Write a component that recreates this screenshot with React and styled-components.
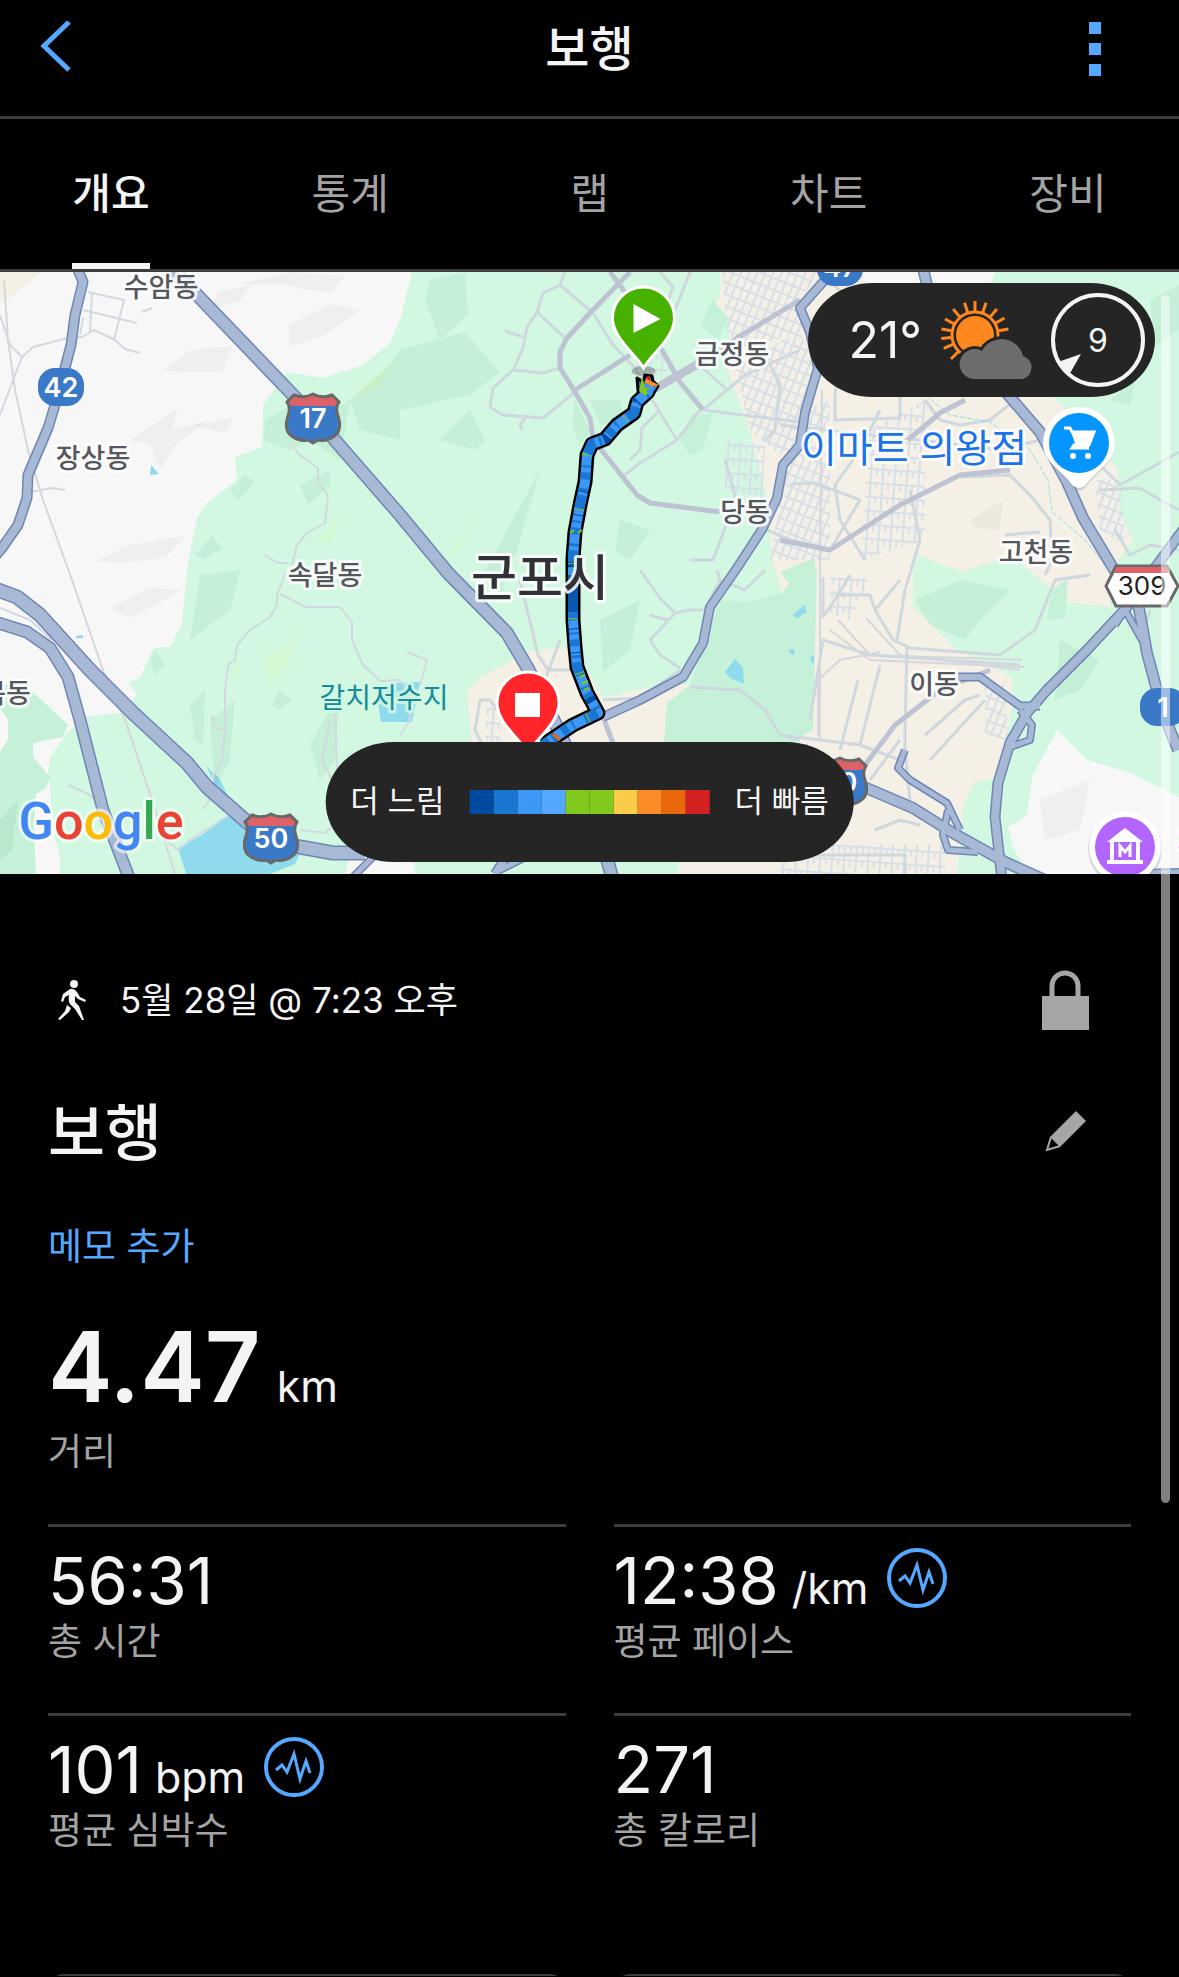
import styled, { createGlobalStyle } from "styled-components";

const GlobalStyle = createGlobalStyle`
	* {
		box-sizing: border-box;
		margin: 0;
		padding: 0;
	}
	body {
		background-color: #000;
		color: #f4f4f4;
		font-family: Inter, "Noto Sans CJK KR", sans-serif;
	}
	button {
		background: none;
		border: none;
		color: inherit;
		font: inherit;
		cursor: pointer;
	}
	a {
		color: inherit;
		text-decoration: none;
	}
	svg {
		display: block;
	}
`;

const Page = styled.main`
	position: relative;
	min-height: 100vh;
	overflow: hidden;
`;

const Header = styled.header`
	display: flex;
	align-items: center;
	justify-content: space-between;
	height: 119px;
	padding: 0 78px 18px 40px;
	border-bottom: 3px solid #3d3d3d;
	h1 {
		padding-left: 18px;
		font-size: 48px;
		font-weight: 500;
		line-height: 60px;
	}
`;

const IconButton = styled.button`
	display: grid;
	place-content: center;
`;

const Tabs = styled.nav`
	display: flex;
	justify-content: space-between;
	height: 153px;
	padding: 0 72px;
	border-bottom: 3px solid #3d3d3d;
`;

const Tab = styled.a`
	display: grid;
	place-items: center;
	min-width: 78px;
	padding-bottom: 2px;
	font-size: 42px;
	font-weight: ${(props) => (props.$active ? 500 : 400)};
	color: ${(props) => (props.$active ? "#f4f4f4" : "#a3a3a3")};
	border-bottom: 6px solid ${(props) => (props.$active ? "#f4f4f4" : "transparent")};
`;

const MapSection = styled.section`
	position: relative;
	height: 602px;
	overflow: hidden;
	.canvas {
		width: 100%;
		height: 100%;
	}
`;

const Pill = styled.div`
	position: absolute;
	display: flex;
	align-items: center;
	background-color: #252525;
	border-radius: 68px / 60px;
`;

const Weather = styled(Pill)`
	top: 11px;
	right: 24px;
	height: 114px;
	gap: 16px;
	padding: 0 10px 0 40px;
	.temp {
		font-size: 50px;
		font-weight: 400;
	}
`;

const Legend = styled(Pill)`
	bottom: 12px;
	left: 50%;
	height: 120px;
	gap: 25px;
	padding: 0 25px;
	transform: translateX(-50%);
	font-size: 31px;
	line-height: 44px;
	white-space: nowrap;
	.caption {
		padding-bottom: 2px;
	}
`;

const Scale = styled.div`
	display: flex;
	span {
		width: 24px;
		height: 24px;
	}
`;

const Details = styled.section`
	padding: 91px 48px 0;
`;

const Row = styled.div`
	display: flex;
	align-items: center;
	justify-content: space-between;
	height: ${(props) => props.$height}px;
	padding-right: 34px;
	h2 {
		padding-top: 6px;
		font-size: 62px;
		font-weight: 500;
		line-height: 80px;
	}
	& + & {
		margin-top: 34px;
	}
`;

const ActivityDate = styled.div`
	display: flex;
	align-items: center;
	gap: 34px;
	padding-left: 10px;
	font-size: 35px;
	line-height: 50px;
`;

const NoteLink = styled.a`
	display: block;
	margin-top: 24px;
	font-size: 37px;
	line-height: 60px;
	color: #55a8ff;
`;

const Metric = styled.div`
	.value {
		display: flex;
		align-items: baseline;
		gap: ${(props) => (props.$main ? 16 : 13)}px;
		height: ${(props) => (props.$main ? 106 : 78)}px;
		line-height: ${(props) => (props.$main ? 86 : 78)}px;
		font-size: ${(props) => (props.$main ? 97 : 65)}px;
		font-weight: ${(props) => (props.$main ? 600 : 400)};
	}
	.unit {
		font-size: 43px;
		font-weight: 400;
	}
	.label {
		font-size: 37px;
		line-height: 44px;
		color: #a3a3a3;
	}
	svg {
		align-self: center;
		margin: 0 0 6px 6px;
	}
`;

const Distance = styled.div`
	margin-top: 47px;
`;

const Grid = styled.div`
	display: grid;
	grid-template-columns: 1fr 1fr;
	column-gap: 48px;
	margin-top: 50px;
	${Metric} {
		height: 189px;
		padding-top: 15px;
		border-top: 3px solid #3d3d3d;
	}
`;

const Cards = styled.div`
	display: grid;
	grid-template-columns: 1fr 1fr;
	gap: 48px;
	height: 74px;
	padding-top: 72px;
	overflow: hidden;
	div {
		height: 120px;
		border: 3px solid #3d3d3d;
		border-radius: 16px;
	}
`;

const ScrollThumb = styled.div`
	position: absolute;
	top: 295px;
	right: 9px;
	width: 9px;
	height: 1208px;
	border-radius: 5px;
	background-color: rgba(255, 255, 255, 0.5);
`;

/* ---------- map data ---------- */

const GREEN = "#d2f8e2";
const BEIGE = "#f5f0e5";
const GRAY = "#f7f7f7";
const WATER = "#90daee";

const areas = [
	[GRAY, "0,272 412,272 400,320 390,343 363,365 323,378 287,372 263,405 262,447 235,457 237,480 207,503 197,518 192,542 187,572 182,623 170,647 153,648 140,678 128,682 137,695 123,712 87,717 67,733 50,757 48,773 50,790 53,830 60,857 60,874 0,874"],
	["#c4f1d7", "0,690 12,678 33,692 68,725 63,737 33,743 33,757 50,777 46,788 36,794 34,830 36,874 0,874 0,752 8,740 8,720 0,708"],
	[BEIGE, "0,272 42,272 10,298 0,303"],
	[BEIGE, "720,272 860,272 1000,340 1053,397 1068,412 1090,440 1118,470 1120,515 1133,540 1118,562 1110,607 1068,602 1010,555 963,572 917,555 913,607 960,650 993,667 1012,677 1013,703 998,777 973,783 963,810 957,874 678,874 678,863 800,740 817,577 783,593 773,565 767,498 750,432 727,368 730,318 715,305 720,295"],
	[GRAY, "860,272 995,272 985,300 870,290"],
	[GREEN, "913,560 963,572 1005,557 1052,590 1040,640 990,665 955,648 913,607"],
	["#c4f1d7", "1068,578 1052,590 1047,620 1065,618"],
	[BEIGE, "480,677 533,650 567,648 583,663 603,698 667,683 690,685 667,703 663,760 473,760 467,693"],
	["#c4f1d7", "720,600 750,602 783,593 797,572 817,570 813,730 800,737 797,760 663,760 667,703 690,685 703,650"],
	["#c4f1d7", "713,300 728,318 718,340 700,325"],
	["#c4f1d7", "692,415 713,413 703,450 690,455 680,440"],
	["#c4f1d7", "780,572 815,558 815,600 795,590"],
	[GRAY, "1057,730 1087,760 1130,773 1179,797 1179,874 1028,874 1013,847 1008,827 1027,815 1032,777"],
	[GRAY, "345,874 352,850 412,858 416,874"],
	[WATER, "178,848 200,836 228,816 244,826 270,836 300,853 295,864 270,874 186,874"],
	[WATER, "376,690 395,683 420,682 412,722 381,722"],
	[WATER, "207,767 219,778 233,806 226,802 213,782"],
	[WATER, "725,672 735,659 743,668 744,684 730,678"],
	[WATER, "793,615 804,605 807,612 797,618"],
	[WATER, "788,650 795,649 793,656"],
	[WATER, "809,658 814,655 814,665"],
	[WATER, "151,465 159,474 150,475"],
	[WATER, "76,636 83,635 83,638 76,638"],
];

const hills = [
	["#000", "218,292 250,285 240,301 210,310"],
	["#000", "235,285 290,272 345,276 332,292 305,290 285,284"],
	["#000", "288,326 330,304 360,310 325,335 290,347"],
	["#000", "163,370 190,350 232,346 222,372 180,372"],
	["#000", "130,440 178,408 172,430 208,420 175,445 160,470 150,445"],
	["#000", "192,425 233,418 225,433"],
	["#000", "93,562 130,545 185,536 165,558 125,563"],
	["#000", "110,608 150,588 182,590 160,602 130,618"],
	["#063", "265,420 300,400 320,420 350,400 340,460 310,440 290,450 264,440"],
	["#063", "350,400 385,370 400,350 400,440 360,430"],
	["#063", "230,490 245,475 255,482 238,500"],
	["#063", "195,555 212,535 222,548 204,560"],
	["#063", "300,485 330,470 330,485 308,505"],
	["#063", "200,575 240,570 230,610 190,640"],
	["#063", "150,660 155,650 165,665 155,675"],
	["#063", "190,705 205,690 203,745 195,740"],
	["#063", "272,705 280,690 292,700 280,710"],
	["#063", "400,350 465,332 500,372 470,395 400,410"],
	["#063", "430,280 465,272 468,315 440,340 425,300"],
	["#063", "470,410 485,440 475,450 440,440"],
	["#063", "575,400 590,430 580,445 572,425"],
	["#063", "590,400 620,400 625,420 600,425"],
	["#063", "600,620 640,600 630,650 603,672"],
	["#063", "915,600 960,580 1010,590 980,620 965,640 930,625"],
	["#063", "1060,640 1100,660 1080,690 1055,700"],
	["#063", "1150,300 1179,285 1179,330 1155,345"],
	["#063", "1110,400 1135,380 1130,405"],
	["#063", "540,470 520,540 500,600 485,570"],
	["#063", "620,520 650,530 630,560 615,550"],
	["#063", "310,745 340,690 335,760 320,780"],
	["#063", "210,720 235,700 230,760 215,790"],
	["#063", "0,820 18,800 12,850 0,860"],
	["#ff0", "445,560 470,520 460,550"],
	["#ff0", "355,390 395,360 380,385 360,395"],
	["#ff0", "230,670 240,660 240,675 235,680"],
	["#ff0", "262,660 298,638 285,670 270,685"],
	["#ff0", "318,540 340,515 330,545"],
	["#000", "1040,800 1090,780 1080,830 1045,840"],
	["#000", "970,520 1003,500 1000,530 975,528"],
];

// dense street blocks of the built-up districts
const blocks = [
	["streetsA", "722,272 820,272 800,300 806,330 740,350 727,330"],
	["streetsA", "735,368 800,330 815,370 800,440 780,455 750,430"],
	["streetsB", "725,440 765,445 762,498 725,490"],
	["streetsA", "782,420 830,400 830,560 770,560 785,470"],
	["streetsB", "870,430 925,400 925,540 860,560"],
	["streetsA", "1095,480 1120,480 1125,545 1100,530"],
	["streetsB", "780,845 945,845 945,874 780,874"],
	["streetsA", "985,680 1005,685 1008,740 985,735"],
	["streetsB", "830,577 870,577 850,620 828,612"],
	["streetsB", "486,708 500,708 500,750 486,750"],
	["streetsB", "640,340 675,360 655,385 635,370"],
];

const paths = [
	"0,315 10,345 22,357 15,375 0,415",
	"22,357 33,347 68,338 82,337 94,330 115,340 125,349 140,353",
	"88,292 124,300 114,340",
	"83,310 137,323",
	"92,292 90,332",
	"83,318 80,335",
	"142,312 152,308",
	"30,492 53,488 65,490",
	"292,445 300,455 318,468 318,482 328,495",
	"265,555 278,563 288,563",
	"328,495 325,523 307,533 297,545 292,565",
	"285,574 277,595 277,605 270,617 250,630 237,645 235,660 228,665 225,690 225,730 222,763 213,775 213,795 202,810",
	"280,594 305,607 340,607 352,622 352,640 363,665 380,681 400,680",
	"68,785 90,795 100,805",
	"212,716 215,727 225,730",
	"160,835 178,850 190,840 227,816",
	"300,830 325,833 340,820",
	"0,608 30,620 52,640",
	"335,700 337,770",
	"330,720 322,760 332,780",
	"407,652 427,660 420,685",
	"400,680 412,695 410,720 400,735",
];

const minorRoads = [
	"565,272 560,285 543,293 537,312 527,327 523,348 513,370 493,388 490,407 503,415 543,418 575,392",
	"513,370 543,373 560,368",
	"537,312 565,338",
	"560,285 593,313 613,345 635,368 645,385",
	"505,331 523,337",
	"527,415 520,425 522,430",
	"660,272 673,287 665,310",
	"690,272 677,305 665,330",
	"652,400 677,440 700,410",
	"660,410 642,428 640,450 630,460",
	"677,440 637,465 623,477",
	"703,410 745,375 778,360 800,350",
	"694,360 727,390",
	"703,410 800,422 800,440",
	"737,338 770,365 780,385 775,430 765,440",
	"725,460 735,495 728,520 713,560 690,560",
	"763,528 790,540 830,550 860,500",
	"520,580 538,655 548,670 575,670",
	"560,640 545,680",
	"603,700 640,698 680,670",
	"640,570 660,598 675,613 650,640 660,655 680,668",
	"675,613 690,610 705,610 720,580 717,570",
	"720,580 745,590 765,570",
	"668,620 650,615",
	"485,750 475,730 480,700 490,700 505,720",
	"820,272 850,300 835,395 835,420 900,418 900,395",
	"925,400 940,420 960,425 990,420 1015,400",
	"780,425 870,435 920,440 1000,450 1040,440",
	"860,500 815,483 790,484",
	"865,560 840,520 835,485 860,450 880,410",
	"910,490 920,540 905,590 897,640",
	"960,477 1010,475 1030,495 1050,520 1052,560 1045,575",
	"1005,535 1040,532",
	"1090,455 1120,485 1179,452",
	"1100,490 1140,488 1160,500 1179,510",
	"1115,530 1130,555 1150,545 1179,550",
	"823,577 823,617 835,600 850,575",
	"835,595 870,595 875,610 893,640 910,648 1000,655 1035,630 1055,580 1090,575",
	"875,610 900,580",
	"907,645 905,730 905,750 910,800",
	"780,735 860,745 900,760",
	"690,687 740,690 765,710 780,735 800,740",
	"810,720 823,640 870,655 1020,665",
	"858,680 840,750",
	"880,665 860,745",
	"930,760 985,700",
	"925,735 965,700 980,695",
	"870,780 900,740",
	"875,830 900,820 920,825",
	"800,855 905,855 905,874",
	"1150,610 1140,640",
];

const arterials = [
	"630,272 590,313 567,338 560,352 560,368 575,392 590,418 593,438 603,452 637,495 650,503 720,512",
	"575,390 630,355",
	"610,272 620,285 663,352 680,382 703,410",
	"647,395 700,365 737,338 800,300",
	"650,390 705,358",
	"780,540 830,550 900,505 960,475 1010,470",
	"908,440 940,413 965,400",
	"603,717 613,743",
	"865,765 895,725 940,690 990,670",
];

const rails = [
	"4,280 8,340 15,390 28,450 43,500 72,580 103,670 125,720 152,800 175,874",
	"822,390 820,560 820,740",
	"838,620 870,655 1022,660",
	"830,630 870,660 1024,667",
	"866,618 900,655 1020,670",
	"818,735 818,680 840,660 880,652",
];

const highways = [
	[9, "78,270 83,282 75,315 71,345 65,368 55,405 48,428 28,475 27,498 18,525 2,548 -8,560"],
	[12, "168,265 200,298 293,395 333,438 400,515 448,573 507,633 527,667 557,727 590,800 613,880"],
	[13, "-5,589 17,597 40,615 90,670 133,713 187,763 207,787 247,822 270,840 300,847 333,853 365,853"],
	[11, "-5,622 27,632 50,648 68,677 80,720 103,810 130,880"],
	[8, "603,717 640,700 683,677 703,643 710,607 737,568 763,528 777,498 783,465 800,445 805,412 818,368 810,332 800,308 823,282 840,270"],
	[10, "923,268 927,285 970,350 1010,397 1040,432 1067,482 1083,518 1113,568 1138,603 1147,653 1163,713 1178,750"],
	[9, "1183,530 1157,565 1127,607 1087,650 1047,690 1027,713 1010,743 998,783 995,817 1002,880"],
	[7, "958,677 980,677 1020,706 1040,706"],
	[6, "1020,710 1032,725 1030,740 1010,747"],
	[6, "1115,625 1125,610 1142,640"],
	[6, "905,750 898,768 910,780 947,803 960,830"],
	[6, "948,810 943,835 948,850 978,852"],
	[10, "864,787 913,808 953,833 1007,863 1045,880"],
	[6, "1100,874 1179,872"],
	[6, "350,880 375,855"],
	[8, "495,874 510,850"],
	[6, "500,870 530,855"],
];

const route =
	"648,382 648,392 637,402 634,413 617,425 605,439 592,444 587,455 585,482 580,505 575,532 573,558 573,590 573,620 575,647 577,667 587,693 598,713 573,725 558,735 543,745";

const places = [
	["수암동", 161, 297, 27],
	["장상동", 93, 468, 27],
	["속달동", 325, 585, 27],
	["금정동", 732, 364, 27],
	["당동", 745, 522, 27],
	["고천동", 1036, 562, 27],
	["이동", 934, 694, 27],
	["목동", 6, 703, 27],
];

const paceColors = [
	"#004ba0", "#1976d2", "#3d97f5", "#55a8ff", "#81c91d",
	"#81c91d", "#fbcc4a", "#fb8c28", "#ea670c", "#d32020",
];

const tabs = ["개요", "통계", "랩", "차트", "장비"];

/* ---------- map pieces ---------- */

const MapLabel = styled.text`
	font-family: Inter, "Noto Sans CJK KR", sans-serif;
	text-anchor: middle;
	paint-order: stroke;
	stroke: ${(props) => props.$halo || "#fff"};
	stroke-width: ${(props) => (props.$plain ? 0 : 6)}px;
	stroke-linejoin: round;
	stroke-opacity: 0.85;
`;

const Wordmark = styled(MapLabel)`
	font-family: Roboto, sans-serif;
	stroke-opacity: 0.6;
`;

function Lines({ list, color, width }) {
	return (
		<g fill="none" stroke={color} strokeWidth={width} strokeLinejoin="round">
			{list.map((points) => (
				<polyline key={points} points={points} />
			))}
		</g>
	);
}

function Shield({ x, y, children }) {
	return (
		<g transform={`translate(${x} ${y})`}>
			<path
				d="M-19-23 Q-9-19 0-24 Q9-19 19-23 L26-16 Q22-10 25-2 Q30 13 20 19 Q12 24 5 22 L0 25 L-5 22 Q-12 24-20 19 Q-30 13-25-2 Q-22-10-26-16Z"
				fill="#3a78c8"
			/>
			<path d="M-19-22 Q-9-18 0-23 Q9-18 19-22 L25-16 L22-12 H-22 L-25-16Z" fill="#dd6166" />
			<path
				d="M-19-23 Q-9-19 0-24 Q9-19 19-23 L26-16 Q22-10 25-2 Q30 13 20 19 Q12 24 5 22 L0 25 L-5 22 Q-12 24-20 19 Q-30 13-25-2 Q-22-10-26-16Z"
				fill="none"
				stroke="#686868"
				strokeWidth="3"
			/>
			<MapLabel $plain y="10" fontSize="27" fontWeight="600" fill="#fff">
				{children}
			</MapLabel>
		</g>
	);
}

function RoadBadge({ x, y, children }) {
	return (
		<g transform={`translate(${x} ${y})`}>
			<rect x="-23" y="-19" width="46" height="38" rx="17" fill="#3a78c8" />
			<MapLabel $plain y="10" fontSize="27" fontWeight="600" fill="#fff">
				{children}
			</MapLabel>
		</g>
	);
}

function Pin({ x, y, color, children }) {
	return (
		<g transform={`translate(${x} ${y})`}>
			<ellipse cx="0" cy="53" rx="12" ry="5" fill="#000" opacity=".25" />
			<path
				d="M0 50 C-8 36-31 20-31 0 A31 31 0 0 1 31 0 C31 20 8 36 0 50Z"
				fill={color}
				stroke="#fff"
				strokeWidth="3"
			/>
			{children}
		</g>
	);
}

function RouteMap() {
	return (
		<svg
			className="canvas"
			viewBox="0 272 1179 602"
			preserveAspectRatio="xMidYMid slice"
			role="img"
			aria-label="군포시 경로 지도"
		>
			<defs>
				<pattern id="streetsA" width="15" height="11" patternUnits="userSpaceOnUse" patternTransform="rotate(22)">
					<path d="M0 1H15M2 0V11M9 1V11" stroke="#d7dfe8" strokeWidth="2" fill="none" />
				</pattern>
				<pattern id="streetsB" width="12" height="14" patternUnits="userSpaceOnUse" patternTransform="rotate(4)">
					<path d="M0 1H12M2 0V14M8 0V7" stroke="#d7dfe8" strokeWidth="2" fill="none" />
				</pattern>
			</defs>

			<rect y="272" width="1179" height="602" fill={GREEN} />
			{areas.map(([fill, points]) => (
				<polygon key={points} fill={fill} points={points} />
			))}
			{hills.map(([fill, points]) => (
				<polygon key={points} fill={fill} opacity={fill === "#000" ? 0.03 : 0.06} points={points} />
			))}
			{blocks.map(([id, points]) => (
				<polygon key={points} fill={`url(#${id})`} points={points} />
			))}

			<Lines list={rails} color="#d6d7dd" width={2} />
			<Lines list={paths} color="#d3d9e1" width={2} />
			<Lines list={minorRoads} color="#cfd8df" width={3} />
			<Lines list={arterials} color="#bdc3d2" width={5} />
			<polyline
				points="925,395 950,415 990,422 1030,450 1048,480 1052,512 1085,540 1115,577"
				fill="none"
				stroke="#8fdcea"
				strokeDasharray="5 2"
			/>

			<g fill="none" strokeLinejoin="round">
				{highways.map(([width, points]) => (
					<polyline key={points} points={points} stroke="#6f86b5" strokeWidth={width + 2} />
				))}
				{highways.map(([width, points]) => (
					<polyline key={points} points={points} stroke="#a8b9d6" strokeWidth={width - 1} />
				))}
			</g>

			<g fill="none" strokeLinejoin="round">
				<path d="M638 391 L637 378 L643 382 L645 375 L652 376 L653 381 L658 386 L652 396Z" fill="#1976d2" stroke="#000" strokeWidth="3" />
				<polyline points={route} stroke="#000" strokeWidth="15" />
				<polyline points={route} stroke="#3d97f5" strokeWidth="10" />
				<polyline points={route} stroke="#1976d2" strokeWidth="10" strokeDasharray="2 5 7 9 3 4 14 12" />
				<polyline points={route} stroke="#004ba0" strokeWidth="10" strokeDasharray="1 23 1 47 5 61" />
				<polyline points={route} stroke="#81c91d" strokeWidth="10" strokeDasharray="1 54" strokeDashoffset="-46" />
				<path d="M573 575V612" stroke="#0b56b0" strokeWidth="10" />
				<path d="M580 677l5-2M582 684l6-3M584 690l5-2M570 533l4-3M578 533l4-3" stroke="#81c91d" strokeWidth="2" />
				<path d="M553 734l7 6" stroke="#ea670c" strokeWidth="3" />
				<path d="M639 391l3-15 3 12 8-1-7 9Z" fill="#81c91d" />
				<path d="M644 383l4-7 3 5 8 4-6 2-5-3Z" fill="#fb8c28" />
				<path d="M646 378l4-3v6Z" fill="#d32020" />
				<path d="M646 390l12-5-8 12Z" fill="#3d97f5" />
			</g>

			{places.map(([name, x, y, size]) => (
				<MapLabel key={name} x={x} y={y} fontSize={size} fontWeight="500" fill="#55575c">
					{name}
				</MapLabel>
			))}
			<MapLabel x="540" y="596" fontSize="50" fontWeight="500" fill="#303236">
				군포시
			</MapLabel>
			<MapLabel $halo={GREEN} x="384" y="708" fontSize="28" fill="#168b9c">
				갈치저수지
			</MapLabel>
			<MapLabel x="914" y="462" fontSize="39" fill="#1a73e8">
				이마트 의왕점
			</MapLabel>

			<RoadBadge x={61} y={387}>42</RoadBadge>
			<RoadBadge x={840} y={267}>47</RoadBadge>
			<RoadBadge x={1163} y={707}>1</RoadBadge>
			<Shield x={313} y={418}>17</Shield>
			<Shield x={271} y={838}>50</Shield>
			<Shield x={840} y={782}>50</Shield>
			<path d="M1116 566H1167L1178 586L1167 606H1116L1106 586Z" fill="#fff" stroke="#686868" strokeWidth="3" />
			<path d="M1117 567H1166L1169 573H1113Z" fill="#dd6166" />
			<MapLabel $plain x="1142" y="595" fontSize="26" fill="#222">
				309
			</MapLabel>

			<g transform="translate(1079 443)">
				<path d="M-35 0A35 35 0 0 1 35 0C35 20 16 28 7 42Q0 49-7 42C-16 28-35 20-35 0Z" fill="#888" opacity=".35" transform="translate(0 2)" />
				<path d="M-36 0A36 36 0 0 1 36 0C36 20 16 28 7 42Q0 48-7 42C-16 28-36 20-36 0Z" fill="#fff" />
				<circle r="30" fill="#0595ff" />
				<path d="M-15-15H-9L-7-11H15L10 2H-5L-7 5H10" fill="none" stroke="#fff" strokeWidth="3" />
				<path d="M-8-11H15L10 3H-3Z" fill="#fff" />
				<circle cx="-6" cy="13" r="3" fill="#fff" />
				<circle cx="9" cy="13" r="3" fill="#fff" />
			</g>
			<g transform="translate(1125 847)">
				<circle r="37" cy="2" fill="#888" opacity=".3" />
				<circle r="36" fill="#fff" />
				<circle r="30" fill="#b266ff" />
				<path d="M-18-5L0-19L18-5Z" fill="#fff" />
				<path d="M-13-5V15M13-5V15M-18 15H18" fill="none" stroke="#fff" strokeWidth="4" />
				<path d="M-5 10V-1L0 5L5-1V10" fill="none" stroke="#fff" strokeWidth="3" />
			</g>
			<MapLabel x="1194" y="860" fontSize="39" fill="#9b4df0">
				경
			</MapLabel>

			<Pin x={643.5} y={318} color="#47b100">
				<path d="M-10-14L17 1L-10 15Z" fill="#fff" />
			</Pin>
			<Pin x={528} y={703} color="#ff2528">
				<rect x="-13" y="-10" width="25" height="24" fill="#fff" />
			</Pin>

			<Wordmark x="101" y="839" fontSize="52" fontWeight="500">
				<tspan fill="#4285f4">G</tspan>
				<tspan fill="#ea4335">o</tspan>
				<tspan fill="#fbbc05">o</tspan>
				<tspan fill="#4285f4">g</tspan>
				<tspan fill="#34a853">l</tspan>
				<tspan fill="#ea4335">e</tspan>
			</Wordmark>
		</svg>
	);
}

/* ---------- icons ---------- */

function WeatherIcon() {
	const rays = [135, 157, 174, 190, 208, 230, 252, 270, 289, 310, 330, 350];
	return (
		<svg width="97" height="82" viewBox="0 0 97 82" aria-hidden="true">
			<g stroke="#ff8720" strokeWidth="3">
				{rays.map((angle) => (
					<path key={angle} d="M24 0H34" transform={`translate(37 36) rotate(${angle})`} />
				))}
				<circle cx="37" cy="36" r="23" fill="none" />
			</g>
			<circle cx="37" cy="36" r="19" fill="#ff8720" />
			<path
				d="M38 80A15 15 0 1 1 44 52A22 22 0 0 1 85 57A12 12 0 0 1 85 80Z"
				fill="#6d6d6d"
				stroke="#252525"
				strokeWidth="6"
				paintOrder="stroke"
			/>
		</svg>
	);
}

const Compass = styled.div`
	position: relative;
	display: grid;
	place-items: center;
	width: 94px;
	height: 94px;
	font-size: 32px;
	svg {
		position: absolute;
		inset: 0;
	}
`;

function PulseIcon() {
	return (
		<svg width="60" height="60" viewBox="0 0 60 60" fill="none" stroke="#55a8ff" aria-hidden="true">
			<circle cx="30" cy="30" r="28" strokeWidth="4" />
			<path d="M12 33L18 28L23 35L30 17L36 42L42 24L46 36" strokeWidth="3" />
		</svg>
	);
}

function Stat({ value, unit, label, pulse, main }) {
	return (
		<Metric $main={main}>
			<div className="value">
				{value}
				{unit && <span className="unit">{unit}</span>}
				{pulse && <PulseIcon />}
			</div>
			<p className="label">{label}</p>
		</Metric>
	);
}

export default function App() {
	return (
		<Page>
			<GlobalStyle />
			<Header>
				<IconButton aria-label="뒤로">
					<svg width="32" height="56" viewBox="0 0 32 56" fill="none">
						<path d="M29 1L4 25L29 49" stroke="#55a8ff" strokeWidth="5" />
					</svg>
				</IconButton>
				<h1>보행</h1>
				<IconButton aria-label="더보기">
					<svg width="12" height="54" viewBox="0 0 12 54" fill="#55a8ff">
						<path d="M0 0H12V12H0ZM0 21H12V33H0ZM0 42H12V54H0Z" />
					</svg>
				</IconButton>
			</Header>

			<Tabs>
				{tabs.map((tab, index) => (
					<Tab key={tab} href={`#tab-${index}`} $active={index === 0}>
						{tab}
					</Tab>
				))}
			</Tabs>

			<MapSection>
				<RouteMap />
				<Weather>
					<span className="temp">21°</span>
					<WeatherIcon />
					<Compass>
						<svg width="94" height="94" viewBox="0 0 94 94" aria-hidden="true">
							<circle cx="47" cy="47" r="45" fill="none" stroke="#f4f4f4" strokeWidth="4" />
							<path d="M30 61L7 69L18 82Z" fill="#f4f4f4" />
						</svg>
						9
					</Compass>
				</Weather>
				<Legend>
					<span className="caption">더 느림</span>
					<Scale>
						{paceColors.map((color, index) => (
							<span key={index} style={{ backgroundColor: color }} />
						))}
					</Scale>
					<span className="caption">더 빠름</span>
				</Legend>
			</MapSection>

			<Details>
				<Row $height={70}>
					<ActivityDate>
						<svg width="28" height="40" viewBox="0 0 28 40" fill="#f4f4f4" aria-hidden="true">
							<circle cx="16" cy="4" r="4" />
							<path d="M12 9Q16 8 19 12L22 17L28 20L27 22L20 19L17 16L17 22L21 26L26 40H24L17 29L12 24Q10 22 11 15L7 17L5 22L3 21L5 14Z" />
							<path d="M9 25L13 28L11 32L2 40L0 39L7 31Z" />
						</svg>
						<span>5월 28일 @ 7:23 오후</span>
					</ActivityDate>
					<IconButton aria-label="개인정보">
						<svg width="60" height="60" viewBox="0 0 60 60" fill="none">
							<path d="M15 30V16A13 13 0 0 1 41 16V30" stroke="#a6a6a6" strokeWidth="5" />
							<path d="M5 26H52V60H5Z" fill="#a6a6a6" />
						</svg>
					</IconButton>
				</Row>
				<Row $height={124}>
					<h2>보행</h2>
					<IconButton aria-label="이름 편집">
						<svg width="60" height="42" viewBox="0 0 60 42">
							<path d="M39 1L49 11L23 37L13 27Z" fill="#a6a6a6" />
							<path d="M14 27L10 40L23 36" fill="none" stroke="#a6a6a6" strokeWidth="2" />
						</svg>
					</IconButton>
				</Row>
				<NoteLink href="#note">메모 추가</NoteLink>
				<Distance>
					<Stat main value="4.47" unit="km" label="거리" />
				</Distance>
				<Grid>
					<Stat value="56:31" label="총 시간" />
					<Stat value="12:38" unit="/km" label="평균 페이스" pulse />
					<Stat value="101" unit="bpm" label="평균 심박수" pulse />
					<Stat value="271" label="총 칼로리" />
				</Grid>
				<Cards>
					<div />
					<div />
				</Cards>
			</Details>
			<ScrollThumb />
		</Page>
	);
}
